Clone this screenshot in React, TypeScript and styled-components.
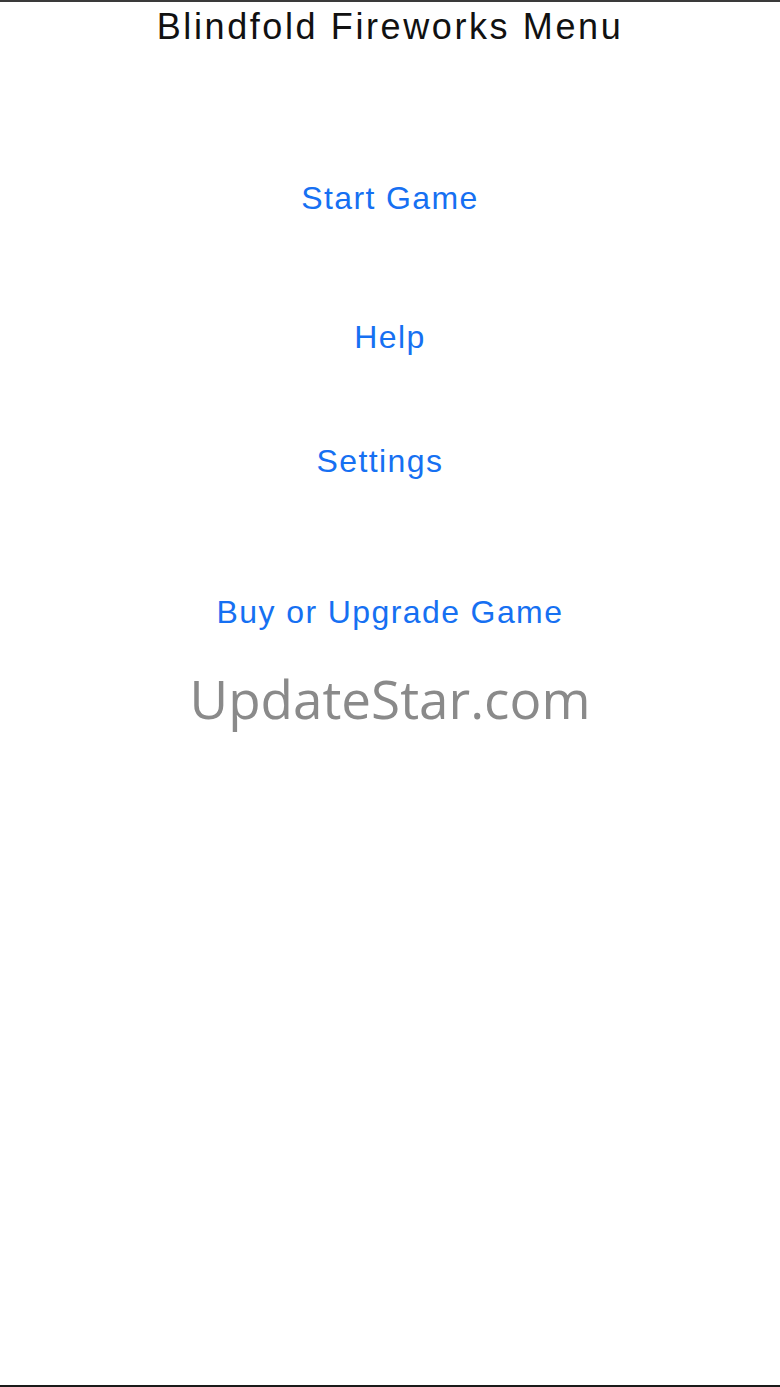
import React from "react";
import styled, { createGlobalStyle } from "styled-components";

const Global = createGlobalStyle`
  html, body { margin: 0; padding: 0; background: #fff; }
  body { font-family: "Liberation Sans", Arial, sans-serif; }
`;

const Screen = styled.div`
  box-sizing: border-box;
  width: 780px;
  height: 1387px;
  border-top: 2px solid #3a3a3a;
  border-bottom: 2px solid #1a1a1a;
  display: flex;
  flex-direction: column;
  align-items: center;
`;

const Title = styled.h1`
  margin: 0;
  height: 50px;
  display: flex;
  align-items: center;
  font-size: 36px;
  font-weight: 400;
  color: #111;
  letter-spacing: 2.6px;
`;

const Slot = styled.div<{ $h: number; $shift?: number }>`
  height: ${(p) => p.$h}px;
  width: 100%;
  display: flex;
  align-items: center;
  justify-content: center;
  padding-right: ${(p) => (p.$shift ? p.$shift * 2 : 0)}px;
  box-sizing: border-box;
`;

const MenuButton = styled.button`
  background: none;
  border: none;
  padding: 0;
  font-family: "Liberation Sans", Arial, sans-serif;
  font-size: 32px;
  letter-spacing: 1.4px;
  color: #1670f2;
  cursor: pointer;
`;

const Watermark = styled.div`
  font-family: "Open Sans", "Noto Sans", sans-serif;
  font-size: 53px;
  color: #8a8a8a;
`;

export default function App() {
  return (
    <>
      <Global />
      <Screen>
        <Title>Blindfold Fireworks Menu</Title>
        <Slot $h={116} />
        <Slot $h={60}>
          <MenuButton>Start Game</MenuButton>
        </Slot>
        <Slot $h={79} />
        <Slot $h={60}>
          <MenuButton>Help</MenuButton>
        </Slot>
        <Slot $h={64} />
        <Slot $h={60} $shift={10}>
          <MenuButton>Settings</MenuButton>
        </Slot>
        <Slot $h={91} />
        <Slot $h={60}>
          <MenuButton>Buy or Upgrade Game</MenuButton>
        </Slot>
        <Slot $h={112}>
          <Watermark>UpdateStar.com</Watermark>
        </Slot>
      </Screen>
    </>
  );
}
